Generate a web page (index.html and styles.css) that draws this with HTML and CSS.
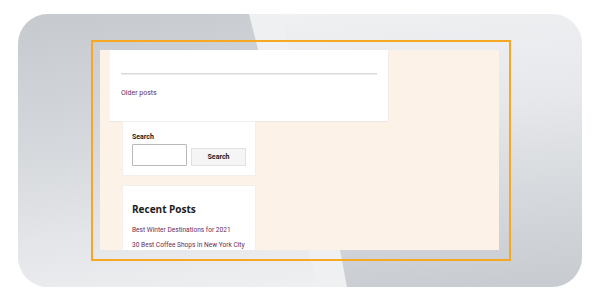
FILE: index.html
```html
<!DOCTYPE html>
<html lang="en">
<head>
<meta charset="utf-8">
<title>Blog preview</title>
<link rel="stylesheet" href="styles.css">
</head>
<body>
<div class="card">
  <div class="shade-left"></div>
  <div class="shade-right"></div>
  <div class="frame">
    <div class="viewport">
      <div class="post-card">
        <div class="rule"></div>
        <a class="older" href="#">Older posts</a>
      </div>
      <div class="sidebar">
        <div class="widget search-widget">
          <div class="label">Search</div>
          <div class="search-row">
            <div class="input"></div>
            <div class="button">Search</div>
          </div>
        </div>
        <div class="widget recent-widget">
          <h2 class="recent-title">Recent Posts</h2>
          <a class="recent-link" href="#">Best Winter Destinations for 2021</a>
          <a class="recent-link" href="#">30 Best Coffee Shops in New York City</a>
        </div>
      </div>
    </div>
  </div>
</div>
</body>
</html>
```
FILE: styles.css
```css
html, body {
  margin: 0;
  padding: 0;
  background: #ffffff;
}
body {
  width: 600px;
  height: 301px;
  overflow: hidden;
  font-family: Roboto, "Liberation Sans", sans-serif;
}
.card {
  position: relative;
  margin: 14px 0 0 18px;
  width: 564px;
  height: 273px;
  border-radius: 30px;
  background: #eef0f2;
  overflow: hidden;
}
.shade-left {
  position: absolute;
  inset: 0;
  background: linear-gradient(172deg, #c6cace 0%, #d3d6da 35%, #e3e5e8 65%, #eef0f2 90%);
  clip-path: polygon(0 0, 231px 0, 300px 273px, 0 273px);
}
.shade-right {
  position: absolute;
  inset: 0;
  background: linear-gradient(175deg, #f1f2f4 0%, #e6e8eb 40%, #d3d6da 75%, #c7cbd0 100%);
  clip-path: polygon(250px 0, 564px 0, 564px 273px, 329px 273px, 322px 236px, 262px 0);
}
.frame {
  position: relative;
  margin: 26px 0 0 73px;
  border: 2px solid #f7a823;
  padding: 8px 10px 9px 7px;
  box-sizing: border-box;
  width: 420px;
  height: 221px;
}
.viewport {
  width: 399px;
  height: 200px;
  background: #fdf2e8;
  overflow: hidden;
  padding-left: 10px;
  box-sizing: border-box;
}
.post-card {
  width: 278px;
  height: 71px;
  background: #ffffff;
  box-shadow: 0 1px 0 #ebe7e3, 1px 0 0 #f1ece7;
  padding: 23px 11px 0;
  box-sizing: border-box;
}
.rule {
  height: 1px;
  background: #d9d9d9;
  border-bottom: 1px solid #ececec;
}
.older {
  display: block;
  margin-top: 13px;
  font-size: 7px;
  line-height: 10px;
  color: #6a2c59;
  text-decoration: none;
}
.sidebar {
  margin-left: 13px;
  width: 132px;
  padding-top: 1px;
}
.widget {
  background: #ffffff;
  box-shadow: 0 0 0 1px #f3eee9;
  box-sizing: border-box;
}
.search-widget {
  height: 53px;
  padding: 10px 9px 0 9px;
}
.label {
  font-size: 7px;
  font-weight: 700;
  line-height: 10px;
  color: #222;
}
.search-row {
  display: flex;
  align-items: flex-end;
  gap: 4px;
  margin-top: 2px;
}
.input {
  width: 55px;
  height: 22px;
  border: 1px solid #b9b9b9;
  border-radius: 1px;
  box-sizing: border-box;
  background: #fff;
}
.button {
  width: 55px;
  height: 18px;
  border: 1px solid #e2e2e2;
  background: #f5f5f5;
  box-sizing: border-box;
  font-size: 7px;
  font-weight: 700;
  line-height: 16px;
  text-align: center;
  color: #222;
}
.recent-widget {
  margin-top: 11px;
  height: 80px;
  padding: 15px 9px 0 9px;
}
.recent-title {
  margin: 0 0 6px;
  font-family: "Open Sans", "Noto Sans", sans-serif;
  font-size: 10px;
  font-weight: 700;
  line-height: 16px;
  color: #1b1b1b;
}
.recent-link {
  display: block;
  font-size: 6.6px;
  line-height: 14.5px;
  color: #6a2c59;
  text-decoration: none;
  white-space: nowrap;
}
```
